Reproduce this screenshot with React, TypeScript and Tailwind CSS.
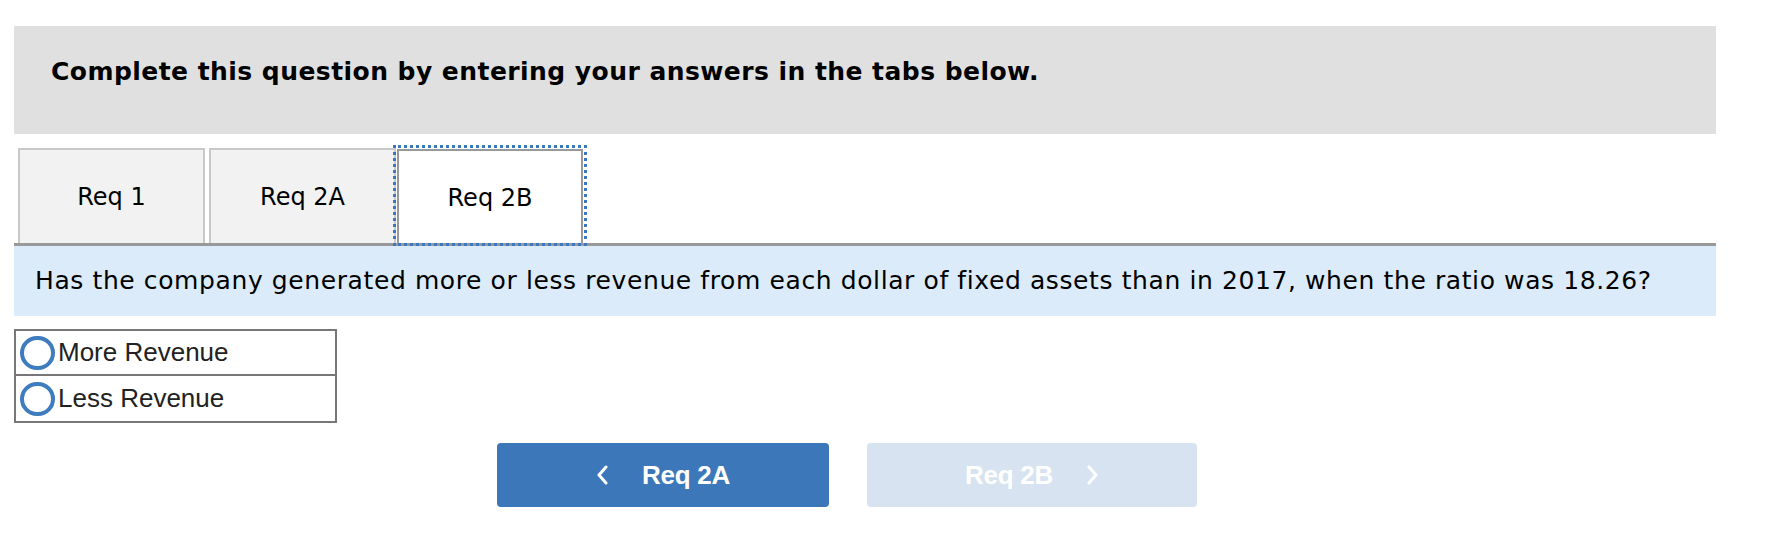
import React from "react";

function Chevron({ dir }: { dir: "left" | "right" }) {
  return (
    <svg width="12" height="20" viewBox="0 0 12 20" fill="none">
      {dir === "left" ? (
        <path d="M10 2 L3 10 L10 18" stroke="white" strokeWidth="3" strokeLinecap="round" strokeLinejoin="round" />
      ) : (
        <path d="M2 2 L9 10 L2 18" stroke="white" strokeWidth="3" strokeLinecap="round" strokeLinejoin="round" />
      )}
    </svg>
  );
}

function Tab({ label }: { label: string }) {
  return (
    <div className="flex h-[95px] w-[187px] items-center justify-center border-2 border-b-0 border-[#c8c8c8] bg-[#f2f2f2] text-[24px] text-black">
      <span>{label}</span>
    </div>
  );
}

function ActiveTab({ label }: { label: string }) {
  return (
    <div className="relative z-10 -mt-[3px] -mb-[3px] -ml-[3px] h-[101px] w-[194px] border-[3px] border-dotted border-[#3b78c0] p-[1px] pb-0">
      <div className="flex h-full w-full items-center justify-center border-2 border-b-0 border-[#999] bg-white text-[24px] text-black">
        <span className="mt-[2px]">{label}</span>
      </div>
    </div>
  );
}

function RadioRow({ label, last }: { label: string; last?: boolean }) {
  return (
    <div className={`flex h-[45px] items-center gap-[3px] pl-[4px] ${last ? "" : "border-b-2 border-[#777]"}`}>
      <div className="h-[34px] w-[35px] rounded-full border-4 border-[#3f7bbf] bg-white" />
      <span className="font-['Liberation_Sans',Arial,sans-serif] text-[26px] text-[#222]">{label}</span>
    </div>
  );
}

export default function App() {
  return (
    <div className="h-[538px] w-[1786px] bg-white font-['DejaVu_Sans',Verdana,sans-serif]">
      <div className="ml-[14px] w-[1702px] pt-[26px]">
        <div className="h-[108px] bg-[#e0e0e0] pl-[37px] pt-[31px]">
          <h1 className="text-[25px] leading-[30px] font-bold tracking-[0.45px] text-black">
            Complete this question by entering your answers in the tabs below.
          </h1>
        </div>

        <div className="mt-[14px] flex items-end border-b-[3px] border-[#999] pl-[4px]">
          <Tab label="Req 1" />
          <div className="w-[4px]" />
          <Tab label="Req 2A" />
          <ActiveTab label="Req 2B" />
        </div>

        <div className="flex h-[70px] items-center bg-[#dbebf9] pl-[21px]">
          <p className="text-[25px] tracking-[0.6px] text-black">
            Has the company generated more or less revenue from each dollar of fixed assets than in 2017, when the ratio was 18.26?
          </p>
        </div>

        <div className="mt-[13px] w-[323px] border-2 border-[#777]">
          <RadioRow label="More Revenue" />
          <RadioRow label="Less Revenue" last />
        </div>

        <div className="mt-[20px] flex gap-[38px] pl-[483px] font-['Liberation_Sans',Arial,sans-serif]">
          <button className="flex h-[64px] w-[332px] items-center justify-center gap-[34px] rounded-[4px] bg-[#3c78b9] text-[26px] font-bold text-white">
            <Chevron dir="left" />
            <span className="tracking-[-0.3px]">Req 2A</span>
          </button>
          <button className="flex h-[64px] w-[330px] items-center justify-center gap-[34px] rounded-[4px] bg-[#d7e3f0] text-[26px] font-bold text-white">
            <span className="tracking-[-0.3px]">Req 2B</span>
            <Chevron dir="right" />
          </button>
        </div>
      </div>
    </div>
  );
}
